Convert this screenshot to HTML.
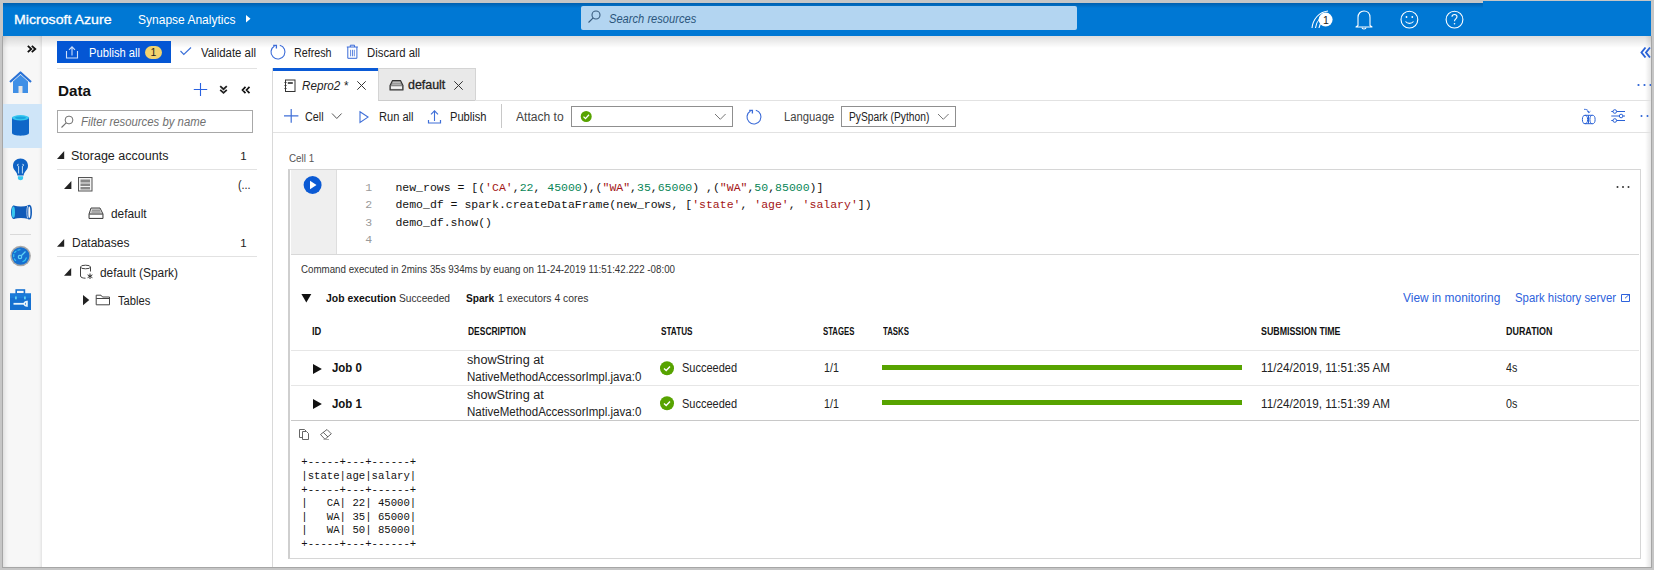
<!DOCTYPE html><html><head><meta charset="utf-8"><style>
html,body{margin:0;padding:0;}
body{width:1654px;height:570px;overflow:hidden;background:#c6c6c6;position:relative;font-family:"Liberation Sans",sans-serif;}
body>div,body>svg{position:absolute;box-sizing:content-box;}
.t{white-space:pre;line-height:1;}
</style></head><body>
<div style="left:3px;top:3px;width:1648px;height:33px;background:#0078d4;"></div>
<div style="left:1483px;top:1px;width:168px;height:2px;background:#0078d4;"></div>
<div style="left:3px;top:3px;width:1480px;height:5px;background:linear-gradient(#005fae,rgba(0,120,212,0));"></div>
<div style="left:3px;top:36px;width:1648px;height:531px;background:#fff;"></div>
<div style="left:3px;top:36px;width:39px;height:531px;background:#f7f7f7;box-shadow:inset 4px 0 4px -2px rgba(0,0,0,.10), inset -3px 0 3px -2px rgba(0,0,0,.10);"></div>
<div style="left:3px;top:36px;width:1648px;height:12px;background:linear-gradient(rgba(0,0,0,.13),rgba(0,0,0,0));"></div>
<div style="left:1645px;top:36px;width:6px;height:531px;background:linear-gradient(90deg,rgba(0,0,0,0),rgba(0,0,0,.10));"></div>
<div class="t" style="left:14px;top:13px;font-size:13.5px;color:#fff;transform:scaleX(1.0480);transform-origin:0 0;-webkit-text-stroke:0.3px #fff;">Microsoft Azure</div>
<div class="t" style="left:137.5px;top:13px;font-size:13.5px;color:#fff;transform:scaleX(0.8899);transform-origin:0 0;">Synapse Analytics</div>
<svg style="position:absolute;left:245px;top:14px;" width="7" height="10" viewBox="0 0 7 10"><polygon points="1,1 5.5,4.75 1,8.5" fill="#fff"/></svg>
<div style="left:581px;top:6px;width:496px;height:24px;background:#b3d5f1;border-radius:2px;"></div>
<svg style="position:absolute;left:586px;top:9px;" width="16" height="16" viewBox="0 0 16 16"><circle cx="10" cy="6" r="4" fill="none" stroke="#3a5c7e" stroke-width="1.1"/><line x1="7.2" y1="8.8" x2="2.5" y2="13.5" stroke="#3a5c7e" stroke-width="1.1"/></svg>
<div class="t" style="left:608.5px;top:13px;font-size:12.5px;color:#2b557c;font-style:italic;transform:scaleX(0.8911);transform-origin:0 0;">Search resources</div>
<svg style="position:absolute;left:1308px;top:8px;" width="30" height="24" viewBox="0 0 30 24"><path d="M4,20 C5,11 11,4 20,3" fill="none" stroke="#fff" stroke-width="1.1"/><path d="M7.5,20 C8.5,13 13,7.5 20,6.5" fill="none" stroke="#fff" stroke-width="1.1"/><path d="M11,20 C12,15 15,11 19,10" fill="none" stroke="#fff" stroke-width="1.1"/><circle cx="17.6" cy="11.6" r="7" fill="#fff"/></svg>
<div class="t" style="left:1323px;top:15px;font-size:10.5px;color:#222;">1</div>
<svg style="position:absolute;left:1354px;top:8px;" width="20" height="24" viewBox="0 0 20 24"><path d="M4,17.5 L4,9.5 C4,5.5 6.5,3 10,3 C13.5,3 16,5.5 16,9.5 L16,17.5 L18,19 L2,19 Z" fill="none" stroke="#fff" stroke-width="1.1" stroke-linejoin="round"/><path d="M8,19.5 C8,21.5 12,21.5 12,19.5" fill="none" stroke="#fff" stroke-width="1.1"/></svg>
<svg style="position:absolute;left:1398px;top:8px;" width="24" height="24" viewBox="0 0 24 24"><circle cx="11.4" cy="11.6" r="8.4" fill="none" stroke="#fff" stroke-width="1.1"/><circle cx="8.5" cy="9" r="0.9" fill="#fff"/><circle cx="14.3" cy="9" r="0.9" fill="#fff"/><path d="M7.5,13.5 C9.5,16 13.5,16 15.5,13.5" fill="none" stroke="#fff" stroke-width="1.1"/></svg>
<svg style="position:absolute;left:1443px;top:8px;" width="24" height="24" viewBox="0 0 24 24"><circle cx="11.5" cy="11.6" r="8.4" fill="none" stroke="#fff" stroke-width="1.1"/><path d="M9,8.8 C9,5.8 14,5.8 14,8.8 C14,10.8 11.5,11 11.5,13.2" fill="none" stroke="#fff" stroke-width="1.1"/><circle cx="11.5" cy="15.8" r="0.8" fill="#fff"/></svg>
<svg style="position:absolute;left:25px;top:44px;" width="14" height="10" viewBox="0 0 14 10"><path d="M2.8,1.8 L6.3,5 L2.8,8.2 M6.8,1.8 L10.3,5 L6.8,8.2" fill="none" stroke="#111" stroke-width="1.8"/></svg>
<svg style="position:absolute;left:9px;top:71px;" width="24" height="24" viewBox="0 0 24 24"><path d="M1,11 L11.5,1.5 L22,11" fill="none" stroke="#2a72d6" stroke-width="2.2" stroke-linejoin="round"/><path d="M4,10.5 L11.5,3.8 L19,10.5 L19,22 L4,22 Z" fill="#3f8fe6"/><rect x="9.5" y="15" width="4" height="7" fill="#e6e6e6"/></svg>
<div style="left:3px;top:104px;width:39px;height:44px;background:#cfe5f8;"></div>
<svg style="position:absolute;left:10px;top:113px;" width="22" height="26" viewBox="0 0 22 26"><path d="M2,4.5 L2,20 C2,23.5 19,23.5 19,20 L19,4.5 Z" fill="#0f66c8"/><ellipse cx="10.5" cy="4.8" rx="8.5" ry="2.7" fill="#36c7f0"/><ellipse cx="10.5" cy="4.8" rx="5.5" ry="1.4" fill="#1aa5e0"/></svg>
<svg style="position:absolute;left:11px;top:157px;" width="20" height="26" viewBox="0 0 20 26"><path d="M9.5,1.6 C5.3,1.6 2,4.7 2,8.8 C2,11.6 3.5,13.1 5,15.1 C6,16.4 6.3,17.6 6.3,18.6 L12.7,18.6 C12.7,17.6 13,16.4 14,15.1 C15.5,13.1 17,11.6 17,8.8 C17,4.7 13.7,1.6 9.5,1.6 Z" fill="#0f62c4"/><path d="M6.9,19.3 L12.1,19.3 L12.1,21.3 C12.1,23.8 6.9,23.8 6.9,21.3 Z" fill="#36c7f0"/><path d="M7.6,16.5 L7.6,9.2 M11.4,16.5 L11.4,9.2 M7.6,9.2 C6,9.2 6,6.8 7.6,7.3 M11.4,9.2 C13,9.2 13,6.8 11.4,7.3" fill="none" stroke="#d6ecfb" stroke-width="0.9"/></svg>
<svg style="position:absolute;left:10px;top:203px;" width="23" height="19" viewBox="0 0 23 19"><path d="M3.5,2.4 Q11,4.6 18.3,2.4 L18.3,16 Q11,13.8 3.5,16 Z" fill="#0f5ab8"/><ellipse cx="3.6" cy="9.2" rx="2.6" ry="6.8" fill="#0f5ab8"/><ellipse cx="3.4" cy="9.2" rx="1.6" ry="5.6" fill="#36c7f0"/><ellipse cx="19.2" cy="9.2" rx="2" ry="6.6" fill="none" stroke="#0f5ab8" stroke-width="1.6"/><path d="M17.6,3 C16.6,6 16.6,12.4 17.6,15.4" fill="none" stroke="#fff" stroke-width="0.7"/></svg>
<div style="left:10px;top:234px;width:21px;height:1px;background:#d9d9d9;"></div>
<svg style="position:absolute;left:9px;top:245px;" width="24" height="24" viewBox="0 0 24 24"><circle cx="11.6" cy="11" r="10.3" fill="#a8a8a8"/><circle cx="11.6" cy="11" r="8.8" fill="#1670d0"/><path d="M7,15.8 A6.2,6.2 0 0 1 11.5,4.8" fill="none" stroke="#36c7f0" stroke-width="1.1" stroke-dasharray="3 1.2"/><path d="M13.5,16.8 A6.2,6.2 0 0 0 17.5,12.5" fill="none" stroke="#36c7f0" stroke-width="1.1"/><circle cx="11" cy="12" r="1.7" fill="none" stroke="#5fd0f5" stroke-width="1.2"/><path d="M12.3,10.7 L16.5,6.5" stroke="#5fd0f5" stroke-width="1.3"/></svg>
<svg style="position:absolute;left:9px;top:288px;" width="24" height="24" viewBox="0 0 24 24"><rect x="7.2" y="2" width="8.2" height="4" fill="none" stroke="#1670d0" stroke-width="1.6"/><rect x="1" y="5.5" width="21" height="16.5" fill="#1670d0"/><rect x="1" y="5.5" width="21" height="4.5" fill="#1b7ad8"/><rect x="6" y="8.5" width="1.8" height="2.8" fill="#5fd0f5"/><rect x="15" y="8.5" width="1.8" height="2.8" fill="#5fd0f5"/><path d="M4.5,15.8 L15.5,15.8" stroke="#e8f4fc" stroke-width="1.8"/><path d="M18.8,13.6 C16.2,13.2 15.2,14.6 15.2,15.8 C15.2,17 16.2,18.4 18.8,18 M18.8,15 L17.5,15 L17.5,16.6 L18.8,16.6" fill="none" stroke="#e8f4fc" stroke-width="1.5"/></svg>
<div style="left:57px;top:41px;width:114px;height:22px;background:#0456d4;"></div>
<svg style="position:absolute;left:64px;top:45px;" width="16" height="15" viewBox="0 0 16 15"><path d="M2.5,6 L2.5,13 L13.5,13 L13.5,6" fill="none" stroke="#cfe0fa" stroke-width="1.1"/><path d="M8,10.5 L8,2 M5,4.8 L8,1.8 L11,4.8" fill="none" stroke="#cfe0fa" stroke-width="1.1"/></svg>
<div class="t" style="left:89px;top:47px;font-size:12.5px;color:#fff;transform:scaleX(0.8951);transform-origin:0 0;">Publish all</div>
<div style="left:145px;top:46px;width:17px;height:13px;border-radius:7px;background:#f2d36e;"></div>
<div class="t" style="left:150.6px;top:47px;font-size:10.5px;color:#222;">1</div>
<svg style="position:absolute;left:179px;top:46px;" width="14" height="11" viewBox="0 0 14 11"><path d="M1.5,5 L4.8,8.5 L12,1.5" fill="none" stroke="#3a6fd8" stroke-width="1.1"/></svg>
<div class="t" style="left:200.5px;top:47px;font-size:12.5px;color:#222;transform:scaleX(0.9132);transform-origin:0 0;">Validate all</div>
<svg style="position:absolute;left:269px;top:43px;" width="18" height="18" viewBox="0 0 18 18"><path d="M10.81,2.24 A7,7 0 1 1 5.5,2.94" fill="none" stroke="#3b6bd8" stroke-width="1.1"/><path d="M4.2,2.4 L7.4,2.4 L7.4,5.6" fill="none" stroke="#3b6bd8" stroke-width="1.3"/></svg>
<div class="t" style="left:293.5px;top:47px;font-size:12.5px;color:#222;transform:scaleX(0.8568);transform-origin:0 0;">Refresh</div>
<svg style="position:absolute;left:345px;top:43px;" width="15" height="17" viewBox="0 0 15 17"><path d="M2.8,4 L2.8,15.3 L11.9,15.3 L11.9,4 M1.8,4 L12.9,4 M5.3,4 L5.3,2.2 L9.5,2.2 L9.5,4" fill="none" stroke="#3b6bd8" stroke-width="1"/><path d="M5.6,6.8 L5.6,13.3 M7.5,6.8 L7.5,13.3 M9.3,6.8 L9.3,13.3" stroke="#3b6bd8" stroke-width="0.8"/></svg>
<div class="t" style="left:367.4px;top:47px;font-size:12.5px;color:#222;transform:scaleX(0.9083);transform-origin:0 0;">Discard all</div>
<div style="left:57px;top:68px;width:200px;height:1px;background:#e2e2e2;"></div>
<svg style="position:absolute;left:1639px;top:45px;" width="14" height="14" viewBox="0 0 14 14"><path d="M6.5,2.5 L2.5,7.5 L6.5,12.5 M11,2.5 L7,7.5 L11,12.5" fill="none" stroke="#2a62d6" stroke-width="1.9"/></svg>
<svg style="position:absolute;left:1636px;top:82px;" width="18" height="6" viewBox="0 0 18 6"><circle cx="2.5" cy="3" r="1.1" fill="#2a62d6"/><circle cx="8.5" cy="3" r="1.1" fill="#2a62d6"/><circle cx="14.5" cy="3" r="1.1" fill="#2a62d6"/></svg>
<div style="left:272px;top:68px;width:1px;height:499px;background:#d9d9d9;"></div>
<div class="t" style="left:57.5px;top:83px;font-size:15px;color:#111;font-weight:bold;transform:scaleX(1.0150);transform-origin:0 0;">Data</div>
<svg style="position:absolute;left:193px;top:82px;" width="16" height="16" viewBox="0 0 16 16"><path d="M7.5,1 L7.5,14 M0.8,7.5 L14.2,7.5" stroke="#2a62e0" stroke-width="1.1"/></svg>
<svg style="position:absolute;left:218px;top:84px;" width="12" height="12" viewBox="0 0 12 12"><path d="M2.2,2.2 L5.5,5.2 L8.8,2.2 M2.2,5.8 L5.5,8.8 L8.8,5.8" fill="none" stroke="#222" stroke-width="1.8"/></svg>
<svg style="position:absolute;left:240px;top:85px;" width="12" height="11" viewBox="0 0 12 11"><path d="M5.5,1.8 L2.5,5 L5.5,8.2 M9.5,1.8 L6.5,5 L9.5,8.2" fill="none" stroke="#111" stroke-width="1.7"/></svg>
<div style="left:57px;top:110px;width:194px;height:21px;border:1px solid #a8a8a8;"></div>
<svg style="position:absolute;left:60px;top:113px;" width="14" height="16" viewBox="0 0 14 16"><circle cx="9" cy="7" r="3.9" fill="none" stroke="#707070" stroke-width="1"/><line x1="6.2" y1="9.8" x2="1.5" y2="14.5" stroke="#707070" stroke-width="1.1"/></svg>
<div class="t" style="left:81.2px;top:116px;font-size:12px;color:#707070;font-style:italic;transform:scaleX(0.9466);transform-origin:0 0;">Filter resources by name</div>
<svg style="position:absolute;left:56px;top:149.5px;" width="9.200000000000003" height="9.900000000000006" viewBox="0 0 9.200000000000003 9.900000000000006"><polygon points="8.200000000000003,1 8.200000000000003,8.900000000000006 1,8.900000000000006" fill="#222"/></svg>
<div class="t" style="left:71.2px;top:150px;font-size:12.5px;color:#222;transform:scaleX(1.0012);transform-origin:0 0;">Storage accounts</div>
<div class="t" style="left:240.3px;top:151px;font-size:11.5px;color:#222;">1</div>
<div style="left:57px;top:169px;width:200px;height:1px;background:#e2e2e2;"></div>
<svg style="position:absolute;left:63.2px;top:179.5px;" width="9.399999999999991" height="9.900000000000006" viewBox="0 0 9.399999999999991 9.900000000000006"><polygon points="8.399999999999991,1 8.399999999999991,8.900000000000006 1,8.900000000000006" fill="#222"/></svg>
<svg style="position:absolute;left:77px;top:176px;" width="17" height="17" viewBox="0 0 17 17"><rect x="1.5" y="1.5" width="13.5" height="13.5" fill="#f2f2f2" stroke="#555" stroke-width="1"/><rect x="3.5" y="3.5" width="9.5" height="3" fill="#888"/><rect x="3.5" y="7.5" width="9.5" height="2.5" fill="#888"/><rect x="3.5" y="11" width="9.5" height="2.5" fill="#888"/></svg>
<div class="t" style="left:238.2px;top:179px;font-size:12.5px;color:#222;transform:scaleX(0.8641);transform-origin:0 0;">(...</div>
<svg style="position:absolute;left:88px;top:206px;" width="17" height="15" viewBox="0 0 17 15"><path d="M3,2 L12,2 L15,8 L15,12.5 L1,12.5 L1,8 Z" fill="#d8d8d8" stroke="#444" stroke-width="1"/><path d="M1,8 L15,8" stroke="#444" stroke-width="1"/><path d="M4,4.2 L12,4.2 M3.5,6 L12.5,6" stroke="#666" stroke-width="0.8"/><rect x="2" y="9" width="12" height="2.5" fill="#fff"/></svg>
<div class="t" style="left:111px;top:208px;font-size:12.5px;color:#222;transform:scaleX(0.9485);transform-origin:0 0;">default</div>
<svg style="position:absolute;left:56px;top:237.5px;" width="9.200000000000003" height="9.800000000000011" viewBox="0 0 9.200000000000003 9.800000000000011"><polygon points="8.200000000000003,1 8.200000000000003,8.800000000000011 1,8.800000000000011" fill="#222"/></svg>
<div class="t" style="left:71.6px;top:237px;font-size:12.5px;color:#222;transform:scaleX(0.9605);transform-origin:0 0;">Databases</div>
<div class="t" style="left:240.3px;top:238px;font-size:11.5px;color:#222;">1</div>
<div style="left:57px;top:256px;width:200px;height:1px;background:#e2e2e2;"></div>
<svg style="position:absolute;left:63.2px;top:267px;" width="9.200000000000003" height="9.800000000000011" viewBox="0 0 9.200000000000003 9.800000000000011"><polygon points="8.200000000000003,1 8.200000000000003,8.800000000000011 1,8.800000000000011" fill="#222"/></svg>
<svg style="position:absolute;left:79px;top:264px;" width="16" height="16" viewBox="0 0 16 16"><path d="M1.5,3 L1.5,12 C1.5,13.5 4,14.2 6.5,14.2 M11.5,3 L11.5,7.5" fill="none" stroke="#444" stroke-width="1"/><ellipse cx="6.5" cy="3" rx="5" ry="1.8" fill="none" stroke="#444" stroke-width="1"/><path d="M11,9.5 L11,15 M8.6,10.8 L13.4,13.7 M8.6,13.7 L13.4,10.8" stroke="#333" stroke-width="1"/></svg>
<div class="t" style="left:100.1px;top:267px;font-size:12.5px;color:#222;transform:scaleX(0.9514);transform-origin:0 0;">default (Spark)</div>
<svg style="position:absolute;left:82px;top:294.4px;" width="8.299999999999997" height="12.200000000000045" viewBox="0 0 8.299999999999997 12.200000000000045"><polygon points="1,1 7.299999999999997,6.100000000000023 1,11.200000000000045" fill="#222"/></svg>
<svg style="position:absolute;left:95px;top:294px;" width="16" height="12" viewBox="0 0 16 12"><path d="M1.2,1.2 L6,1.2 L7.5,3 L14.5,3 L14.5,10.8 L1.2,10.8 Z M1.2,4.5 L14.5,4.5" fill="none" stroke="#444" stroke-width="1"/></svg>
<div class="t" style="left:117.7px;top:295px;font-size:12.5px;color:#222;transform:scaleX(0.8967);transform-origin:0 0;">Tables</div>
<div style="left:273px;top:68px;width:105.5px;height:3px;background:#0a5ad6;"></div>
<div style="left:378px;top:68px;width:96px;height:31px;background:#e9e9e9;border:1px solid #d4d4d4;border-bottom-color:#cccccc"></div>
<div style="left:475px;top:99.5px;width:1176px;height:1px;background:#e2e2e2;"></div>
<svg style="position:absolute;left:283px;top:79px;" width="14" height="14" viewBox="0 0 14 14"><rect x="2.5" y="1" width="9.5" height="11.5" fill="none" stroke="#333" stroke-width="1"/><rect x="4.8" y="3" width="5" height="2" fill="#555"/><path d="M1.5,3.5 L3.5,3.5 M1.5,6.5 L3.5,6.5 M1.5,9.5 L3.5,9.5" stroke="#333" stroke-width="1"/></svg>
<div class="t" style="left:302px;top:80px;font-size:12.5px;color:#222;font-style:italic;transform:scaleX(0.9324);transform-origin:0 0;">Repro2 *</div>
<svg style="position:absolute;left:356px;top:80px;" width="11" height="11" viewBox="0 0 11 11"><path d="M1.3,1.3 L9.7,9.7 M9.7,1.3 L1.3,9.7" stroke="#333" stroke-width="1"/></svg>
<svg style="position:absolute;left:389px;top:79px;" width="15" height="13" viewBox="0 0 15 13"><path d="M3.5,1.5 L11.5,1.5 L14,6.5 L14,11 L1,11 L1,6.5 Z" fill="#8a8a8a" stroke="#333" stroke-width="1.1" stroke-linejoin="round"/><rect x="2" y="7.3" width="11" height="2.6" fill="#f4f4f4"/><path d="M3.6,3.4 L11.4,3.4 M3.2,5.2 L11.8,5.2" stroke="#d0d0d0" stroke-width="0.8"/></svg>
<div class="t" style="left:408.2px;top:79px;font-size:12.3px;color:#222;transform:scaleX(1.0100);transform-origin:0 0;-webkit-text-stroke:0.3px #222;">default</div>
<svg style="position:absolute;left:453px;top:80px;" width="11" height="11" viewBox="0 0 11 11"><path d="M1.3,1.3 L9.7,9.7 M9.7,1.3 L1.3,9.7" stroke="#333" stroke-width="1"/></svg>
<svg style="position:absolute;left:283px;top:108px;" width="17" height="16" viewBox="0 0 17 16"><path d="M8.2,1 L8.2,14.8 M1,7.9 L15.4,7.9" stroke="#3f6fd8" stroke-width="1.2"/></svg>
<div class="t" style="left:305px;top:111px;font-size:12.5px;color:#222;transform:scaleX(0.8637);transform-origin:0 0;">Cell</div>
<svg style="position:absolute;left:331px;top:112px;" width="12" height="9" viewBox="0 0 12 9"><path d="M1,1.5 L5.8,6.5 L10.6,1.5" fill="none" stroke="#555" stroke-width="1"/></svg>
<svg style="position:absolute;left:358px;top:110px;" width="12" height="14" viewBox="0 0 12 14"><path d="M2,1.8 L10,7.1 L2,12.4 Z" fill="none" stroke="#3f6fd8" stroke-width="1.1"/></svg>
<div class="t" style="left:378.5px;top:111px;font-size:12.5px;color:#222;transform:scaleX(0.8866);transform-origin:0 0;">Run all</div>
<svg style="position:absolute;left:427px;top:109px;" width="15" height="16" viewBox="0 0 15 16"><path d="M7.5,12 L7.5,2 M4,5.3 L7.5,1.8 L11,5.3" fill="none" stroke="#3f6fd8" stroke-width="1.1"/><path d="M1.5,11 L1.5,14 L13.5,14 L13.5,11" fill="none" stroke="#3f6fd8" stroke-width="1.2"/></svg>
<div class="t" style="left:449.5px;top:111px;font-size:12.5px;color:#222;transform:scaleX(0.8903);transform-origin:0 0;">Publish</div>
<div style="left:501px;top:104px;width:1px;height:24px;background:#c8c8c8;"></div>
<div class="t" style="left:516px;top:111px;font-size:12.5px;color:#444;transform:scaleX(0.9669);transform-origin:0 0;">Attach to</div>
<div style="left:571px;top:106px;width:160px;height:19px;border:1px solid #8f8f8f;"></div>
<svg style="position:absolute;left:580px;top:110px;" width="13" height="13" viewBox="0 0 13 13"><circle cx="6.2" cy="6.5" r="5.5" fill="#57a300"/><path d="M3.5,6.6 L5.5,8.6 L9,4.8" fill="none" stroke="#fff" stroke-width="1.3"/></svg>
<svg style="position:absolute;left:714px;top:113px;" width="13" height="8" viewBox="0 0 13 8"><path d="M1,1 L6.3,6.3 L11.6,1" fill="none" stroke="#777" stroke-width="1"/></svg>
<svg style="position:absolute;left:745px;top:108px;" width="18" height="18" viewBox="0 0 18 18"><path d="M10.81,2.24 A7,7 0 1 1 5.5,2.94" fill="none" stroke="#3b6bd8" stroke-width="1.1"/><path d="M4.2,2.4 L7.4,2.4 L7.4,5.6" fill="none" stroke="#3b6bd8" stroke-width="1.3"/></svg>
<div class="t" style="left:783.7px;top:111px;font-size:12.5px;color:#444;transform:scaleX(0.9026);transform-origin:0 0;">Language</div>
<div style="left:841px;top:106px;width:113px;height:19px;border:1px solid #8f8f8f;"></div>
<div class="t" style="left:849.3px;top:111px;font-size:12px;color:#222;transform:scaleX(0.8539);transform-origin:0 0;">PySpark (Python)</div>
<svg style="position:absolute;left:937px;top:113px;" width="13" height="8" viewBox="0 0 13 8"><path d="M1,1 L6.3,6.3 L11.6,1" fill="none" stroke="#777" stroke-width="1"/></svg>
<div style="left:273px;top:132px;width:1378px;height:1px;background:#e2e2e2;"></div>
<svg style="position:absolute;left:1580px;top:107px;" width="18" height="18" viewBox="0 0 18 18"><path d="M4,2.3 C6.5,2.3 8.5,3 8.8,5.5 M7.2,4.3 L8.8,5.8 L10.4,4.3" fill="none" stroke="#2a62d6" stroke-width="0.9"/><ellipse cx="5" cy="12.5" rx="2.6" ry="4.2" fill="none" stroke="#2a62d6" stroke-width="1"/><ellipse cx="12.5" cy="12.5" rx="2.6" ry="4.2" fill="none" stroke="#2a62d6" stroke-width="1"/><path d="M5,8.3 L12.5,8.3 M5,16.7 L12.5,16.7 M8.5,8.3 L8.5,16.7" fill="none" stroke="#2a62d6" stroke-width="1"/></svg>
<svg style="position:absolute;left:1610px;top:108px;" width="16" height="16" viewBox="0 0 16 16"><path d="M1.3,3.5 L15,3.5 M1.3,8 L15,8 M1.3,12.5 L15,12.5" stroke="#2a62d6" stroke-width="1"/><circle cx="4.8" cy="3.5" r="1.8" fill="#fff" stroke="#2a62d6" stroke-width="1"/><circle cx="11.1" cy="8" r="1.8" fill="#fff" stroke="#2a62d6" stroke-width="1"/><circle cx="4.8" cy="12.5" r="1.8" fill="#fff" stroke="#2a62d6" stroke-width="1"/></svg>
<svg style="position:absolute;left:1638px;top:113px;" width="16" height="6" viewBox="0 0 16 6"><circle cx="3.5" cy="3" r="1" fill="#2a62d6"/><circle cx="9.5" cy="3" r="1" fill="#2a62d6"/><circle cx="15.5" cy="3" r="1" fill="#2a62d6"/></svg>
<div class="t" style="left:288.8px;top:153px;font-size:10.5px;color:#555;transform:scaleX(0.9387);transform-origin:0 0;">Cell 1</div>
<div style="left:288px;top:169px;width:1350px;height:388px;border:1px solid #d6d6d6;border-left:2.5px solid #cfcfcf;"></div>
<div style="left:290.5px;top:170px;width:45.5px;height:84px;background:#efefef;border-right:1px solid #dedede;"></div>
<svg style="position:absolute;left:302px;top:174px;" width="22" height="22" viewBox="0 0 22 22"><circle cx="10.6" cy="11" r="9" fill="#0b5ad4"/><path d="M8,6.8 L14.5,11 L8,15.2 Z" fill="#fff"/></svg>
<div class="t" style="left:365.3px;top:182px;font-size:11.5px;color:#9a9a9a;font-family:'Liberation Mono',monospace;">1</div>
<div class="t" style="left:365.3px;top:199px;font-size:11.5px;color:#9a9a9a;font-family:'Liberation Mono',monospace;">2</div>
<div class="t" style="left:365.3px;top:217px;font-size:11.5px;color:#9a9a9a;font-family:'Liberation Mono',monospace;">3</div>
<div class="t" style="left:365.3px;top:234px;font-size:11.5px;color:#9a9a9a;font-family:'Liberation Mono',monospace;">4</div>
<div class="t" style="left:395.4px;top:182px;font-size:11.5px;font-family:'Liberation Mono',monospace;color:#111;letter-spacing:0.0px">new_rows = [(<span style="color:#a31515">&#x27;CA&#x27;</span>,<span style="color:#098658">22</span>, <span style="color:#098658">45000</span>),(<span style="color:#a31515">&quot;WA&quot;</span>,<span style="color:#098658">35</span>,<span style="color:#098658">65000</span>) ,(<span style="color:#a31515">&quot;WA&quot;</span>,<span style="color:#098658">50</span>,<span style="color:#098658">85000</span>)]</div>
<div class="t" style="left:395.4px;top:199px;font-size:11.5px;font-family:'Liberation Mono',monospace;color:#111;letter-spacing:0.0px">demo_df = spark.createDataFrame(new_rows, [<span style="color:#a31515">&#x27;state&#x27;</span>, <span style="color:#a31515">&#x27;age&#x27;</span>, <span style="color:#a31515">&#x27;salary&#x27;</span>])</div>
<div class="t" style="left:395.4px;top:217px;font-size:11.5px;font-family:'Liberation Mono',monospace;color:#111;letter-spacing:0.0px">demo_df.show()</div>
<svg style="position:absolute;left:1614px;top:183px;" width="18" height="8" viewBox="0 0 18 8"><circle cx="3.5" cy="4" r="1" fill="#333"/><circle cx="9" cy="4" r="1" fill="#333"/><circle cx="14.5" cy="4" r="1" fill="#333"/></svg>
<div style="left:290.5px;top:254px;width:1348.5px;height:1px;background:#d8d8d8;"></div>
<div class="t" style="left:300.6px;top:265px;font-size:10px;color:#333;transform:scaleX(0.9745);transform-origin:0 0;">Command executed in 2mins 35s 934ms by euang on 11-24-2019 11:51:42.222 -08:00</div>
<svg style="position:absolute;left:300px;top:293px;" width="13" height="11" viewBox="0 0 13 11"><polygon points="1.4,1 11.3,1 6.35,9.4" fill="#111"/></svg>
<div class="t" style="left:326.2px;top:293px;font-size:11.5px;color:#111;font-weight:bold;transform:scaleX(0.9053);transform-origin:0 0;">Job execution</div>
<div class="t" style="left:399.4px;top:293px;font-size:11.5px;color:#333;transform:scaleX(0.8862);transform-origin:0 0;">Succeeded</div>
<div class="t" style="left:465.8px;top:293px;font-size:11.5px;color:#111;font-weight:bold;transform:scaleX(0.8823);transform-origin:0 0;">Spark</div>
<div class="t" style="left:498px;top:293px;font-size:11.5px;color:#333;transform:scaleX(0.9008);transform-origin:0 0;">1 executors 4 cores</div>
<div class="t" style="left:1402.9px;top:292px;font-size:12.5px;color:#2d62dc;transform:scaleX(0.9548);transform-origin:0 0;">View in monitoring</div>
<div class="t" style="left:1515.2px;top:292px;font-size:12.5px;color:#2d62dc;transform:scaleX(0.9087);transform-origin:0 0;">Spark history server</div>
<svg style="position:absolute;left:1620px;top:292px;" width="11" height="11" viewBox="0 0 11 11"><path d="M1.5,2.5 L9.5,2.5 L9.5,9.5 L1.5,9.5 Z" fill="none" stroke="#2d62dc" stroke-width="1"/><path d="M5,6.3 L9,2.6 M6.6,2.5 L9.5,2.5 L9.5,5.4" fill="none" stroke="#2d62dc" stroke-width="1"/></svg>
<div class="t" style="left:312px;top:327px;font-size:10px;color:#111;font-weight:bold;transform:scaleX(0.9300);transform-origin:0 0;">ID</div>
<div class="t" style="left:467.5px;top:327px;font-size:10px;color:#111;font-weight:bold;transform:scaleX(0.8458);transform-origin:0 0;">DESCRIPTION</div>
<div class="t" style="left:660.5px;top:327px;font-size:10px;color:#111;font-weight:bold;transform:scaleX(0.8178);transform-origin:0 0;">STATUS</div>
<div class="t" style="left:822.7px;top:327px;font-size:10px;color:#111;font-weight:bold;transform:scaleX(0.7752);transform-origin:0 0;">STAGES</div>
<div class="t" style="left:882.5px;top:327px;font-size:10px;color:#111;font-weight:bold;transform:scaleX(0.7843);transform-origin:0 0;">TASKS</div>
<div class="t" style="left:1260.7px;top:327px;font-size:10px;color:#111;font-weight:bold;transform:scaleX(0.8833);transform-origin:0 0;">SUBMISSION TIME</div>
<div class="t" style="left:1506px;top:327px;font-size:10px;color:#111;font-weight:bold;transform:scaleX(0.8937);transform-origin:0 0;">DURATION</div>
<div style="left:290.5px;top:350px;width:1348.5px;height:1px;background:#e6e6e6;"></div>
<svg style="position:absolute;left:311.8px;top:362.5px;" width="10.899999999999977" height="12.0" viewBox="0 0 10.899999999999977 12.0"><polygon points="1,1 9.899999999999977,6.0 1,11.0" fill="#111"/></svg>
<div class="t" style="left:332px;top:362px;font-size:12px;color:#111;font-weight:bold;transform:scaleX(0.9540);transform-origin:0 0;">Job 0</div>
<div class="t" style="left:467.2px;top:354px;font-size:12px;color:#222;transform:scaleX(1.0563);transform-origin:0 0;">showString at</div>
<div class="t" style="left:467.2px;top:371px;font-size:12px;color:#222;transform:scaleX(0.9608);transform-origin:0 0;">NativeMethodAccessorImpl.java:0</div>
<svg style="position:absolute;left:659px;top:359.5px;" width="16" height="16" viewBox="0 0 16 16"><circle cx="8" cy="8.3" r="7" fill="#57a300"/><path d="M5,8.5 L7.2,10.6 L11,6.6" fill="none" stroke="#fff" stroke-width="1.4"/></svg>
<div class="t" style="left:682.3px;top:362px;font-size:12.5px;color:#222;transform:scaleX(0.8809);transform-origin:0 0;">Succeeded</div>
<div class="t" style="left:823.8px;top:362px;font-size:12.5px;color:#222;transform:scaleX(0.8517);transform-origin:0 0;">1/1</div>
<div style="left:882px;top:365px;width:360px;height:5px;background:#57a300;"></div>
<div class="t" style="left:1261px;top:362px;font-size:12.5px;color:#222;transform:scaleX(0.9358);transform-origin:0 0;">11/24/2019, 11:51:35 AM</div>
<div class="t" style="left:1506px;top:362px;font-size:12.5px;color:#222;transform:scaleX(0.8559);transform-origin:0 0;">4s</div>
<div style="left:290.5px;top:385px;width:1348.5px;height:1px;background:#e6e6e6;"></div>
<svg style="position:absolute;left:311.8px;top:397.8px;" width="10.899999999999977" height="12.0" viewBox="0 0 10.899999999999977 12.0"><polygon points="1,1 9.899999999999977,6.0 1,11.0" fill="#111"/></svg>
<div class="t" style="left:332px;top:398px;font-size:12px;color:#111;font-weight:bold;transform:scaleX(0.9540);transform-origin:0 0;">Job 1</div>
<div class="t" style="left:467.2px;top:389px;font-size:12px;color:#222;transform:scaleX(1.0563);transform-origin:0 0;">showString at</div>
<div class="t" style="left:467.2px;top:406px;font-size:12px;color:#222;transform:scaleX(0.9608);transform-origin:0 0;">NativeMethodAccessorImpl.java:0</div>
<svg style="position:absolute;left:659px;top:394.8px;" width="16" height="16" viewBox="0 0 16 16"><circle cx="8" cy="8.3" r="7" fill="#57a300"/><path d="M5,8.5 L7.2,10.6 L11,6.6" fill="none" stroke="#fff" stroke-width="1.4"/></svg>
<div class="t" style="left:682.3px;top:398px;font-size:12.5px;color:#222;transform:scaleX(0.8809);transform-origin:0 0;">Succeeded</div>
<div class="t" style="left:823.8px;top:398px;font-size:12.5px;color:#222;transform:scaleX(0.8517);transform-origin:0 0;">1/1</div>
<div style="left:882px;top:400.3px;width:360px;height:5px;background:#57a300;"></div>
<div class="t" style="left:1261px;top:398px;font-size:12.5px;color:#222;transform:scaleX(0.9358);transform-origin:0 0;">11/24/2019, 11:51:39 AM</div>
<div class="t" style="left:1506px;top:398px;font-size:12.5px;color:#222;transform:scaleX(0.8559);transform-origin:0 0;">0s</div>
<div style="left:290.5px;top:420px;width:1348.5px;height:1px;background:#c8c8c8;"></div>
<svg style="position:absolute;left:297px;top:427px;" width="15" height="15" viewBox="0 0 15 15"><path d="M5.5,4.5 L9.5,4.5 L11.5,6.5 L11.5,12.5 L5.5,12.5 Z" fill="none" stroke="#555" stroke-width="0.9"/><path d="M5.5,10.5 L2.5,10.5 L2.5,2.5 L7.5,2.5 L9,4" fill="none" stroke="#555" stroke-width="0.9"/></svg>
<svg style="position:absolute;left:318px;top:427px;" width="16" height="15" viewBox="0 0 16 15"><path d="M2.5,7.5 L9,2.5 L13.3,6.8 L7,12.3 Z M5.2,5.3 L10,10" fill="none" stroke="#555" stroke-width="0.9" stroke-linejoin="round"/><path d="M5.5,12.5 L11,12.5" stroke="#aaa" stroke-width="1"/></svg>
<div class="t" style="left:301.3px;top:457px;font-size:10.65px;color:#111;font-family:'Liberation Mono',monospace;white-space:pre;">+-----+---+------+</div>
<div class="t" style="left:301.3px;top:471px;font-size:10.65px;color:#111;font-family:'Liberation Mono',monospace;white-space:pre;">|state|age|salary|</div>
<div class="t" style="left:301.3px;top:485px;font-size:10.65px;color:#111;font-family:'Liberation Mono',monospace;white-space:pre;">+-----+---+------+</div>
<div class="t" style="left:301.3px;top:498px;font-size:10.65px;color:#111;font-family:'Liberation Mono',monospace;white-space:pre;">|   CA| 22| 45000|</div>
<div class="t" style="left:301.3px;top:512px;font-size:10.65px;color:#111;font-family:'Liberation Mono',monospace;white-space:pre;">|   WA| 35| 65000|</div>
<div class="t" style="left:301.3px;top:525px;font-size:10.65px;color:#111;font-family:'Liberation Mono',monospace;white-space:pre;">|   WA| 50| 85000|</div>
<div class="t" style="left:301.3px;top:539px;font-size:10.65px;color:#111;font-family:'Liberation Mono',monospace;white-space:pre;">+-----+---+------+</div>
<div style="left:1652px;top:0px;width:2px;height:570px;background:#c6c6c6;"></div>
<div style="left:1651px;top:36px;width:1px;height:532px;background:#a6a6a6;"></div>
<div style="left:2px;top:36px;width:1px;height:532px;background:#a6a6a6;"></div>
<div style="left:2px;top:567px;width:1650px;height:1px;background:#a6a6a6;"></div>
</body></html>
